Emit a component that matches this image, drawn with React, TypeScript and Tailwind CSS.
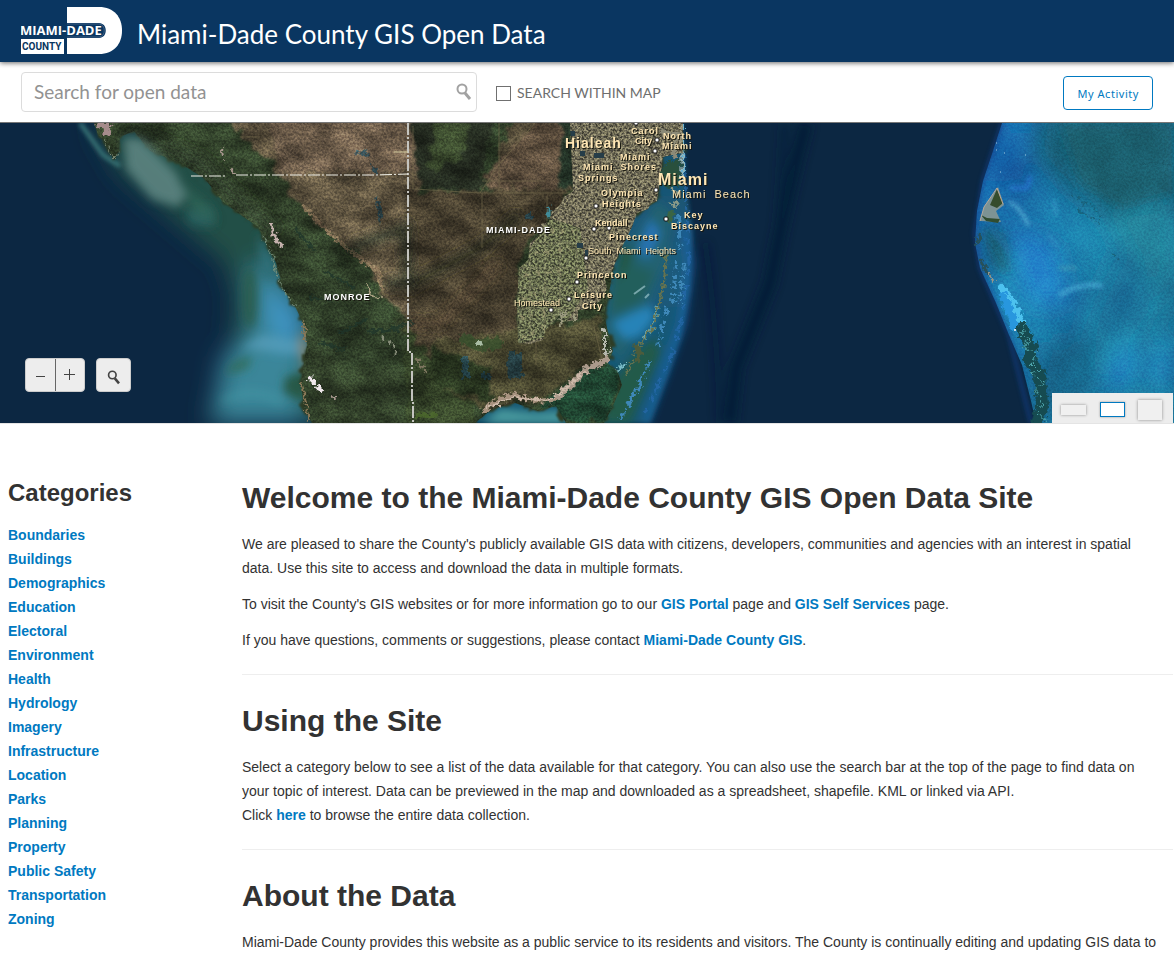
import React from "react";

const categories = [
  "Boundaries",
  "Buildings",
  "Demographics",
  "Education",
  "Electoral",
  "Environment",
  "Health",
  "Hydrology",
  "Imagery",
  "Infrastructure",
  "Location",
  "Parks",
  "Planning",
  "Property",
  "Public Safety",
  "Transportation",
  "Zoning",
];

type Place = { name: string; x: number; y: number; size: number; bold: boolean; spacing: number };

const places: Place[] = [
  { name: "Hialeah", x: 565, y: 25, size: 14, bold: true, spacing: 1 },
  { name: "Carol", x: 631, y: 11, size: 9, bold: true, spacing: 1 },
  { name: "City", x: 635, y: 21, size: 9, bold: true, spacing: 0 },
  { name: "North", x: 663, y: 16, size: 9, bold: true, spacing: 1 },
  { name: "Miami", x: 662, y: 26, size: 9, bold: true, spacing: 1 },
  { name: "Miami", x: 620, y: 37, size: 9, bold: true, spacing: 1 },
  { name: "Miami  Shores", x: 583, y: 47, size: 9, bold: true, spacing: 1 },
  { name: "Springs", x: 578, y: 58, size: 9, bold: true, spacing: 1 },
  { name: "Miami", x: 658, y: 62, size: 16, bold: true, spacing: 1 },
  { name: "Miami  Beach", x: 672, y: 75, size: 11, bold: false, spacing: 1 },
  { name: "Olympia", x: 601, y: 73, size: 9, bold: true, spacing: 1 },
  { name: "Heights", x: 602, y: 84, size: 9, bold: true, spacing: 1 },
  { name: "Key", x: 684, y: 95, size: 9, bold: true, spacing: 1 },
  { name: "Biscayne", x: 671, y: 106, size: 9, bold: true, spacing: 1 },
  { name: "Kendall", x: 595, y: 103, size: 9, bold: true, spacing: 0 },
  { name: "Pinecrest", x: 609, y: 117, size: 9, bold: true, spacing: 1 },
  { name: "South  Miami  Heights", x: 588, y: 131, size: 9, bold: false, spacing: 0 },
  { name: "Princeton", x: 577, y: 155, size: 9, bold: true, spacing: 1 },
  { name: "Leisure", x: 574, y: 175, size: 9, bold: true, spacing: 1 },
  { name: "City", x: 582, y: 186, size: 9, bold: true, spacing: 1 },
  { name: "Homestead", x: 514, y: 183, size: 9, bold: false, spacing: 0 },
];

const markers = [
  [657, 17], [655, 28], [656, 67], [596, 83], [594, 106], [609, 105],
  [666, 96], [586, 135], [577, 159], [569, 176], [551, 187], [636, 0],
];

const land =
  "M94 0 L98 12 L105 18 L114 37 L119 28 L120 14 L134 8 L150 28 L180 40 L205 56 L222 78 L238 90 L258 104 L268 124 L276 140 L284 168 L296 185 L304 202 L307 222 L304 240 L301 262 L304 285 L312 300 L475 300 L492 286 L515 280 L538 288 L556 283 L566 300 L604 300 L612 285 L622 262 L618 250 L608 240 L613 228 L607 205 L604 190 L610 165 L614 140 L632 98 L640 88 L657 78 L661 50 L663 30 L683 30 L683 0 Z";

function Aerial() {
  return (
    <svg
      className="block h-full w-full"
      viewBox="0 0 1174 300"
      preserveAspectRatio="xMinYMin slice"
      role="img"
      aria-label="Satellite map of Miami-Dade County"
    >
      <defs>
        <filter id="b2" x="-20%" y="-20%" width="140%" height="140%"><feGaussianBlur stdDeviation="2" /></filter>
        <filter id="b5" x="-50%" y="-50%" width="200%" height="200%"><feGaussianBlur stdDeviation="5" /></filter>
        <filter id="b12" x="-50%" y="-50%" width="200%" height="200%"><feGaussianBlur stdDeviation="12" /></filter>
        <filter id="rough" x="-5%" y="-5%" width="110%" height="110%" colorInterpolationFilters="sRGB">
          <feTurbulence type="fractalNoise" baseFrequency="0.09" numOctaves="4" seed="4" result="n" />
          <feDisplacementMap in="SourceGraphic" in2="n" scale="18" xChannelSelector="R" yChannelSelector="G" />
          <feGaussianBlur stdDeviation="1" />
        </filter>
        <filter id="fine" x="-10%" y="-10%" width="120%" height="120%" colorInterpolationFilters="sRGB">
          <feTurbulence type="fractalNoise" baseFrequency="0.22" numOctaves="3" seed="9" result="n" />
          <feDisplacementMap in="SourceGraphic" in2="n" scale="9" xChannelSelector="R" yChannelSelector="G" />
        </filter>
        <filter id="grain" x="0" y="0" width="100%" height="100%" colorInterpolationFilters="sRGB">
          <feTurbulence type="fractalNoise" baseFrequency="0.03 0.05" numOctaves="7" seed="12" />
          <feColorMatrix values="2 0 0 0 -0.5  2 0 0 0 -0.5  2 0 0 0 -0.5  0 0 0 0 1" />
        </filter>
        <filter id="speckle" x="0" y="0" width="100%" height="100%" colorInterpolationFilters="sRGB">
          <feTurbulence type="fractalNoise" baseFrequency="0.45" numOctaves="3" seed="7" />
          <feColorMatrix values="2.4 0 0 0 -0.7  2.4 0 0 0 -0.7  2.2 0.2 0 0 -0.7  0 0 0 0 1" />
        </filter>
        <filter id="swirl" x="0" y="0" width="100%" height="100%" colorInterpolationFilters="sRGB">
          <feTurbulence type="fractalNoise" baseFrequency="0.018 0.014" numOctaves="4" seed="21" />
          <feColorMatrix values="1.6 0 0 0 -0.3  1.6 0 0 0 -0.3  1.6 0 0 0 -0.3  0 0 0 0 1" />
        </filter>
        <linearGradient id="shelf" x1="0" y1="0" x2="0" y2="1">
          <stop offset="0" stopColor="#17506c" />
          <stop offset="0.45" stopColor="#1c5b7c" />
          <stop offset="1" stopColor="#145670" />
        </linearGradient>
        <linearGradient id="bank" x1="0" y1="0" x2="1" y2="0.4">
          <stop offset="0" stopColor="#155cab" />
          <stop offset="0.35" stopColor="#1b78ae" />
          <stop offset="1" stopColor="#1a779b" />
        </linearGradient>
        <clipPath id="landClip"><path d={land} /></clipPath>
        <clipPath id="urbanClip">
          <path d="M570 0 L683 0 L682 30 L663 34 L657 78 L651 80 L648 86 L637 90 L632 104 L620 128 L612 148 L605 156 L607 166 L600 178 L588 186 L578 187 L578 197 L563 199 L560 192 L552 201 L546 206 L543 217 L530 221 L518 220 L517 180 L519 145 L528 137 L530 120 L538 113 L541 101 L549 99 L552 88 L560 82 L564 74 L573 68 Z" />
        </clipPath>
        <clipPath id="bankClip">
          <path d="M1002 0 L993 28 L983 58 L977 88 L975 120 L980 145 L996 180 L1009 212 L1022 242 L1031 278 L1036 300 L1174 300 L1174 0 Z" />
        </clipPath>
      </defs>

      <rect width="1174" height="300" fill="#0c2742" />

      {/* deep-water streaks */}
      <g filter="url(#b5)" fill="none" stroke="#061b35" opacity="0.8">
        <path d="M806 0 Q786 75 770 160 L736 245 L730 300" strokeWidth="12" />
        <path d="M705 120 Q716 190 720 300" strokeWidth="7" opacity="0.5" />
        <path d="M785 0 L778 130" strokeWidth="8" opacity="0.6" />
      </g>

      {/* Gulf shallows */}
      <g filter="url(#b12)">
        <path d="M92 0 L120 50 L150 76 L185 106 L225 140 L235 175 L232 220 L207 300 L330 300 L320 190 L280 90 L180 10 Z" fill="#245047" />
        <path d="M250 140 L276 150 L300 190 L305 245 L300 300 L212 300 L222 235 L252 210 Z" fill="#3f8fa8" opacity="0.85" />
        <path d="M262 160 L292 184 L303 214 L282 225 Z" fill="#419ad0" />
      </g>
      <g filter="url(#b5)">
        <ellipse cx="250" cy="175" rx="8" ry="30" fill="#285a45" opacity="0.7" />
        <path d="M232 240 L252 232 L248 246 L225 252 Z" fill="#2c6950" opacity="0.7" />
        <path d="M258 110 L275 142 L268 160 L262 150 Z" fill="#2f6f79" />
        <path d="M262 212 L302 218 L298 232 L240 225 Z" fill="#5a9fbe" opacity="0.7" />
        <path d="M300 205 L311 230 L304 250 L298 225 Z" fill="#8b8873" opacity="0.8" />
        <path d="M285 255 L312 245 L306 280 L284 270 Z" fill="#275847" />
        <path d="M222 278 Q255 262 282 280" stroke="#4da3ae" strokeWidth="4" fill="none" opacity="0.6" />
        <path d="M186 86 L212 84 L214 104 L190 102 Z" fill="#2a6464" opacity="0.8" />
      </g>
      <path d="M80 0 L103 32 L120 43" fill="none" stroke="#3b7879" strokeWidth="4" filter="url(#b2)" />

      {/* Atlantic shelf */}
      <path d="M600 20 L683 0 L686 60 L692 110 L690 168 L681 214 L668 252 L650 300 L460 300 L520 270 L590 230 Z" fill="url(#shelf)" filter="url(#b2)" />
      <g filter="url(#b5)">
        <path d="M657 78 L672 90 L665 140 L652 170 L632 220 L620 240 L604 210 L612 150 Z" fill="#216271" />
        <path d="M650 95 L661 110 L648 136 L638 128 Z" fill="#2673b4" />
        <path d="M652 182 L655 196 L640 214 L624 216 L612 200 L632 190 Z" fill="#2683b8" />
        <path d="M622 120 L635 130 L620 160 L614 160 Z" fill="#225743" />
        <path d="M630 140 L655 150 L640 180 L612 190 L612 165 Z" fill="#245f5c" />
        <path d="M482 300 L500 286 L536 290 L560 288 L570 300 Z" fill="#4c9da0" />
        <path d="M612 260 L634 232 L655 214 L660 230 L630 300 L600 300 Z" fill="#225a48" />
        <path d="M684 100 L690 140 L682 200 L664 250 L645 300" stroke="#1f62a8" strokeWidth="6" fill="none" />
      </g>
      <g filter="url(#fine)" fill="none">
        <path d="M683 30 L687 90 L689 140 L683 190 L670 238 L645 290" stroke="#2a6cb3" strokeWidth="3" opacity="0.6" strokeDasharray="14 5 6 8" />
        <path d="M683 0 V60" stroke="#68b0d1" strokeWidth="2" />
        <path d="M678 90 L680 128 M676 140 L673 180 M668 185 L658 222 M650 238 L629 282 M642 260 L620 296 M684 140 L680 180" stroke="#3e88b8" strokeWidth="4" strokeDasharray="8 4 3 3" />
        <path d="M658 183 L652 205 L644 215 M626 240 L616 250" stroke="#77bac5" strokeWidth="3" />
        <path d="M666 130 L664 160 L659 180 L652 205 L642 218 L632 232 M634 238 L624 252" stroke="#66734f" strokeWidth="2" />
        <path d="M635 222 L640 230 L636 238" stroke="#4c5c3c" strokeWidth="5" />
      </g>
      <path d="M634 171 L645 163 M645 175 L649 171" stroke="#9bc5cb" strokeWidth="2" opacity="0.7" />

      {/* Mainland */}
      <g filter="url(#rough)">
        <path d={land} fill="#2e3c25" />
      </g>
      <g clipPath="url(#landClip)">
        <rect width="700" height="300" fill="#2f3e28" />
        <g filter="url(#rough)">
          <path d="M225 -5 L275 47 L302 84 L318 100 L342 120 L372 142 L380 170 L415 202 L420 -5 Z" fill="#5f5440" />
          <path d="M270 -5 L420 -5 L420 48 L282 50 Z" fill="#6a5a48" />
          <path d="M404 68 L570 68 L549 94 L518 143 L517 220 L500 245 L410 235 Z" fill="#463e2e" />
          <path d="M412 -5 L418 64 L480 69 L493 -5 Z" fill="#242b20" />
          <path d="M435 -5 L470 -5 L465 32 L430 50 Z" fill="#354329" />
          <path d="M520 -5 L570 -5 L570 68 L493 69 L500 15 Z" fill="#4f4735" />
          <path d="M480 65 L490 50 L535 0 L562 0 L562 67 Z" fill="#5e4f3e" />
          <path d="M561 -5 L574 -5 L574 64 L560 67 Z" fill="#253528" />
          <path d="M430 220 L600 195 L608 236 L584 246 L545 275 L485 286 L430 260 Z" fill="#47452e" />
          <path d="M430 222 L490 245 L490 280 L428 260 Z" fill="#293620" />
          <path d="M405 190 L440 265 L475 280 L475 310 L405 310 Z" fill="#324026" />
          <path d="M308 220 L342 245 L403 245 L405 310 L320 310 Z" fill="#303e28" />
          <path d="M543 282 L583 251 L612 238 L622 260 L605 300 L570 300 Z" fill="#1f4430" />
        </g>
        <path d="M302 82 L320 101 L345 124 L378 148 L382 165" stroke="#8d775b" strokeWidth="4" fill="none" opacity="0.8" filter="url(#fine)" />
        <g filter="url(#b5)" fill="none">
          <path d="M405 165 L480 125 L520 92" stroke="#2d2d22" strokeWidth="12" />
          <path d="M400 202 L440 200 L500 140" stroke="#5e4b37" strokeWidth="7" opacity="0.7" />
          <path d="M350 125 L405 105 L408 160 L385 160" stroke="#343829" strokeWidth="12" />
          <path d="M130 10 L200 40 L240 80 L275 110" stroke="#34452c" strokeWidth="18" opacity="0.7" />
        </g>
        <g filter="url(#fine)" fill="#244653" opacity="0.8">
          <path d="M462 233 h7 v22 h-7z M508 230 h14 v25 h-16z M481 251 h10 v5 h-10z M525 91 h10 v6 h-10z M375 72 l8 15 -3 15z M354 30 l12 -3 3 7z M370 40 l10 8 -3 5z" />
        </g>
        <rect width="700" height="300" filter="url(#grain)" opacity="0.32" style={{ mixBlendMode: "overlay" }} />
        <rect width="700" height="300" filter="url(#speckle)" opacity="0.2" style={{ mixBlendMode: "overlay" }} />
        <g fill="none" stroke="#746c4d" strokeWidth="1" opacity="0.6">
          <path d="M413 3 V66 L480 70 H570 M482 70 V125 M499 0 V68 M482 58 H545 M480 70 L498 43 L535 0 M240 14 H258 M536 218 V242 M547 73 V98 M594 204 L602 236" />
        </g>
        <g stroke="#1e352b" strokeWidth="3" filter="url(#fine)" fill="none" opacity="0.7">
          <path d="M295 106 L315 128 M324 148 L355 165 M335 176 L310 175 M340 210 L368 195 M365 208 L400 207 M320 220 L345 226 M391 205 L413 200" />
        </g>
      </g>

      {/* Plume off the Naples coast */}
      <g filter="url(#b5)">
        <path d="M124 14 L142 16 L176 50 L186 72 L178 84 L152 76 L126 46 Z" fill="#5f8684" opacity="0.85" />
        <path d="M182 62 L204 78 L218 98 L196 92 Z" fill="#2f6659" opacity="0.8" />
      </g>

      {/* Developed corridor and farmland */}
      <g clipPath="url(#urbanClip)">
        <rect x="510" width="180" height="230" fill="#6e6a55" />
        <path d="M517 145 L550 95 L580 105 L588 165 L560 210 L515 222 Z" fill="#656b4d" />
        <rect x="510" width="180" height="230" filter="url(#speckle)" opacity="0.5" style={{ mixBlendMode: "overlay" }} />
        <g stroke="#b5ac8b" strokeWidth="1" opacity="0.3">
          <path d="M530 110 V220 M545 85 V218 M560 70 V205 M577 0 V190 M592 0 V190 M608 0 V150 M625 0 V115 M642 0 V85 M520 145 H612 M520 165 H605 M520 185 H600 M535 120 H625 M555 98 H635 M570 82 H653 M570 58 H660 M570 38 H661 M570 18 H661" />
        </g>
        <g filter="url(#fine)" stroke="#b3aa80" strokeWidth="3" strokeDasharray="4 7" opacity="0.5" fill="none">
          <path d="M522 215 L545 205 M520 195 L550 190 M522 175 L548 168 M525 152 L560 148 M535 130 L570 126 M550 108 L580 108" />
        </g>
        <path d="M568 8 h7 v5 h-7z M569 20 h9 v4 h-9z M580 28 h5 v5 h-5z M594 30 h10 v5 h-10z M577 120 h6 v5 h-6z M585 127 h3 v6 h-3z M615 143 h4 v3 h-4z" fill="#263d48" />
      </g>
      <g filter="url(#fine)">
        <path d="M665 40 L681 35 L680 62 L667 66 L660 55 Z" fill="#29503d" />
        <path d="M661 8 L676 12 L674 34" stroke="#8b8a78" strokeWidth="4" fill="none" />
        <path d="M671 66 L679 71 L675 84 L669 79" stroke="#8d9b89" strokeWidth="2" fill="none" />
        <path d="M668 90 L674 88 L672 102 L665 97 Z" fill="#3a6544" />
        <path d="M682 2 V56" stroke="#c2bfa7" strokeWidth="1" />
      </g>

      {/* Pale marl shoreline, salt flats and lakes */}
      <g filter="url(#fine)" fill="none" strokeLinecap="round">
        <path d="M484 287 L500 276 L512 272 L527 276 L543 278 L558 276" stroke="#a8937f" strokeWidth="5" strokeDasharray="4 5" />
        <path d="M558 274 L568 264 L576 257 L585 247 L599 241 L607 236" stroke="#ab9a8b" strokeWidth="6" />
        <path d="M487 285 L514 274 L546 278 L560 270 L586 248" stroke="#cfbbab" strokeWidth="2" />
        <path d="M605 207 V232 L609 228" stroke="#b6b9ae" strokeWidth="2" />
        <path d="M272 103 L275 116 L281 122" stroke="#c5b1ad" strokeWidth="4" />
        <path d="M263 113 L272 132 L276 148 L285 170 L297 185" stroke="#78907c" strokeWidth="1" />
        <path d="M310 255 L314 259 M318 265 L322 268" stroke="#f0e8ec" strokeWidth="4" />
        <path d="M333 274 L336 276 M222 26 L223 34 M230 46 L234 50" stroke="#a9988f" strokeWidth="2" />
        <path d="M382 215 L393 220 L395 230" stroke="#858b77" strokeWidth="3" strokeDasharray="2 5" />
        <path d="M368 162 L372 174 L380 175" stroke="#aaa082" strokeWidth="2" />
        <path d="M99 1 L108 3 L106 9" stroke="#a58c8b" strokeWidth="7" />
        <path d="M105 17 L113 36 L119 29" stroke="#7b8974" strokeWidth="1" />
        <path d="M303 200 L306 220 M302 262 L309 297" stroke="#887757" strokeWidth="2" />
        <path d="M418 236 L428 253" stroke="#7c755e" strokeWidth="3" strokeDasharray="2 5" />
        <path d="M465 216 L478 222 L496 220" stroke="#34552d" strokeWidth="12" opacity="0.6" />
        <path d="M477 221 h3" stroke="#a9bca4" strokeWidth="4" />
        <path d="M562 203 L560 193 L566 190 M575 192 V199" stroke="#9c9b80" strokeWidth="2" />
        <path d="M418 292 H436" stroke="#51702d" strokeWidth="5" opacity="0.7" />
        <path d="M549 85 V94" stroke="#408b98" strokeWidth="3" />
      </g>

      {/* Bahamas bank */}
      <g clipPath="url(#bankClip)">
        <rect x="970" width="204" height="300" fill="url(#bank)" />
        <g filter="url(#b12)">
          <path d="M1042 -10 L1180 -10 L1180 90 L1110 100 L1070 70 L1035 30 Z" fill="#195e76" />
          <path d="M1012 105 L1055 120 L1070 180 L1032 185 L1008 130 Z" fill="#2386cd" />
          <path d="M1115 130 L1150 150 L1160 190 L1122 240 L1080 280 L1065 250 Z" fill="#1b7ea3" />
          <path d="M1045 220 L1100 215 L1080 300 L1030 300 Z" fill="#18668b" />
          <path d="M1119 228 L1135 218 L1130 260 L1108 270 Z" fill="#248fd8" />
          <path d="M1155 220 L1174 215 L1170 270 L1145 260 Z" fill="#228bc5" />
          <path d="M1100 90 L1174 80 L1174 190 Z" fill="#22809a" />
          <path d="M990 10 L1020 10 L1014 55 L990 60 Z" fill="#1762a9" />
          <path d="M982 100 L1005 112 L1012 155 L990 150 Z" fill="#1c667e" />
        </g>
        <g filter="url(#b5)">
          <path d="M1060 0 L1174 0 L1174 70 L1120 85 L1080 60 Z" fill="#1a5a66" opacity="0.6" />
          <path d="M983 106 L1002 110 L1010 150 L998 148 Z" fill="#1d6c80" opacity="0.8" />
        </g>
        <g filter="url(#b2)" fill="none" strokeLinecap="round">
          <path d="M1011 65 H1027 L1030 55" stroke="#2582cb" strokeWidth="5" />
          <path d="M1010 79 Q1020 84 1028 101" stroke="#4aa2ce" strokeWidth="4" />
          <path d="M1054 78 L1056 91 M1048 112 L1058 124" stroke="#3093c4" strokeWidth="3" />
          <path d="M1060 172 Q1080 159 1101 163" stroke="#45a7d2" strokeWidth="4" />
          <path d="M1060 145 H1076" stroke="#3c98b6" strokeWidth="3" />
          <path d="M993 108 L1010 130" stroke="#267bab" strokeWidth="3" />
        </g>
        <rect x="970" width="204" height="300" filter="url(#swirl)" opacity="0.15" style={{ mixBlendMode: "overlay" }} />
        <rect x="970" width="204" height="300" filter="url(#speckle)" opacity="0.08" style={{ mixBlendMode: "overlay" }} />
        <g filter="url(#fine)" fill="none" stroke="#184e5c" opacity="0.5">
          <path d="M1070 72 L1090 82 L1104 95 M1078 88 L1103 101 M1140 42 L1155 38 L1170 42 M1095 62 L1110 62 M1112 130 L1121 139" strokeWidth="2" strokeDasharray="5 3 2 4" />
        </g>
      </g>
      <path d="M1002 0 L983 58 L975 110 L980 145 L1009 212 L1031 300" fill="none" stroke="#133f8a" strokeWidth="4" opacity="0.6" filter="url(#b2)" />
      <path d="M980 98 L984 84 L998 64 L1004 82 L996 88 L1001 99 Z" fill="#7d9394" />
      <path d="M997 66 L1003 80 L997 85 L990 82 Z" fill="#354c2c" />
      <path d="M981 92 L987 95 L1000 96 L998 100 L986 98 Z" fill="#304c30" />
      <path d="M980 98 L984 84 L997 65 L1003 81" fill="none" stroke="#b9a89a" />
      <g filter="url(#fine)" fill="none" strokeLinecap="round" strokeLinejoin="round">
        <path d="M980 112 L978 120 M980 137 L989 152" stroke="#26505a" strokeWidth="4" />
        <path d="M988 150 L994 158" stroke="#92968b" strokeWidth="2" />
        <path d="M1001 164 L1010 175 L1019 192 L1022 201" stroke="#4dc2ef" strokeWidth="6" />
        <path d="M1003 173 L1014 197 L1014 204" stroke="#2897de" strokeWidth="8" />
        <path d="M1022 205 L1031 223 L1029 236 L1040 253 L1042 284 L1037 300" stroke="#164b51" strokeWidth="12" />
        <path d="M1026 200 L1021 213 L1029 216 L1024 226 L1037 230 L1031 240 L1039 248 L1030 250 L1045 259 L1035 266 L1044 280 L1037 288 L1048 300" stroke="#4ea6ac" strokeWidth="1" />
      </g>
      <path d="M996 20 h1 M996 27 h1 M1000 49 h1 M1004 30 h1 M1025 32 h1" stroke="#a3c9e0" strokeWidth="1" />
      <circle cx="1015" cy="207" r="1" fill="#fff" />

      {/* County lines */}
      <g fill="none" stroke="#f0f0e8" strokeWidth="1" strokeDasharray="12 2 2 2">
        <path d="M408 0 V229 H412 V278 H413 V300" strokeWidth="2" stroke="#c4c4bf" />
        <path d="M236 52 H375 L408 51 M191 53 H225" />
      </g>
      <path d="M394 29 H408" stroke="#d9d1a3" />

      {markers.map(([x, y]) => (
        <rect key={`${x}-${y}`} x={x - 2} y={y - 2} width="4" height="4" rx="1" fill="#fff" stroke="#111" strokeWidth="1" />
      ))}
      <g fontFamily="'Liberation Sans', Arial, sans-serif" fill="#ffe7b5" style={{ filter: "drop-shadow(1px 1px 0 #17170f)" }}>
        {places.map((p) => (
          <text key={`${p.name}-${p.x}`} x={p.x} y={p.y} fontSize={p.size} fontWeight={p.bold ? 700 : 400} letterSpacing={p.spacing} xmlSpace="preserve">
            {p.name}
          </text>
        ))}
        <g fontSize="9" fontWeight="700" letterSpacing="1" fill="#fff">
          <text x="324" y="177">MONROE</text>
          <text x="486" y="110">MIAMI-DADE</text>
        </g>
      </g>
    </svg>
  );
}

function CountyLogo() {
  return (
    <svg className="h-[48px] w-[102px] shrink-0" viewBox="0 0 102 48" role="img" aria-label="Miami-Dade County">
      <path d="M46 0 H78 C93 0 101 10 101 23.500 C101 37 93 47 78 47 H46 Z" fill="#fff" />
      <path d="M45 16 H78 C87 16 87 31 78 31 H45 Z" fill="#0a3661" />
      <path d="M46 17 H78 C85 17 85 30 78 30 H46" fill="none" stroke="#7189a4" strokeWidth="0.500" />
      <rect y="32" width="43" height="15" fill="#fff" />
      <g fontFamily="'Open Sans', sans-serif" fontWeight="700">
        <text x="-1" y="28" fontSize="13" fill="#fff">MIAMI-DADE</text>
        <text x="1" y="43" fontSize="10" fontFamily="Roboto, sans-serif" fontWeight="700" fill="#0a3661">COUNTY</text>
      </g>
    </svg>
  );
}

function Magnifier({ className }: { className: string }) {
  return (
    <svg className={className} viewBox="0 0 16 18" fill="none" stroke="currentColor" aria-hidden="true">
      <circle cx="6" cy="6" r="4.500" strokeWidth="2" />
      <path d="M9 10 L14 16" strokeWidth="3" />
    </svg>
  );
}

function TextLink({ children }: { children: React.ReactNode }) {
  return <a href="#" className="font-bold text-[#0079c1] hover:underline">{children}</a>;
}

export default function App() {
  return (
    <div className="min-h-screen bg-white font-['Liberation_Sans',Arial,sans-serif] text-sm leading-6 text-[#323232]">
      <header className="relative flex h-[62px] items-center gap-[14px] bg-[#0a3661] pl-[21px] shadow-[0_1px_5px_#666]">
        <CountyLogo />
        <span className="pt-[6px] font-[Lato,sans-serif] text-[26px] leading-8 text-white">Miami-Dade County GIS Open Data</span>
      </header>

      <div className="flex h-[61px] items-center border-b border-[#777] px-[21px] font-[Lato,sans-serif]">
        <form className="relative w-[456px]" onSubmit={(e) => e.preventDefault()}>
          <input
            type="search"
            aria-label="Search for open data"
            placeholder="Search for open data"
            className="h-10 w-full rounded border border-[#dcdcdc] pr-9 pb-[2px] pl-3 text-[19px] text-[#555] outline-none placeholder:text-[#929292]"
          />
          <button type="submit" aria-label="Search" className="absolute top-[11px] right-[5px] text-[#a2a2a2]">
            <Magnifier className="h-[18px] w-4" />
          </button>
        </form>
        <label className="ml-[19px] flex items-center gap-[6px] pt-[2px] text-sm text-[#6e6e6e]">
          <input type="checkbox" className="size-[15px] appearance-none border border-[#707070] bg-white checked:bg-[#0079c1]" />
          SEARCH WITHIN MAP
        </label>
        <button type="button" className="mt-[2px] ml-auto h-[34px] rounded border border-[#0079c1] px-[13px] pt-[2px] font-['Noto_Sans',sans-serif] text-[11px] tracking-wider text-[#0079c1]">
          My Activity
        </button>
      </div>

      <section className="relative h-[301px] overflow-hidden border-b border-[#e4e4e4]" aria-label="Map">
        <Aerial />
        <div className="absolute bottom-[31px] left-[25px] flex gap-[11px] text-[#444]">
          <div className="flex h-[34px] w-[60px] overflow-hidden rounded border border-[#ccc] bg-[#ededed]">
            <button type="button" aria-label="Zoom out" className="flex flex-1 items-center justify-center border-r border-[#666]">
              <svg className="size-[13px]" viewBox="0 0 13 13" stroke="currentColor" aria-hidden="true"><path d="M2 7.500 H11" /></svg>
            </button>
            <button type="button" aria-label="Zoom in" className="flex flex-1 items-center justify-center">
              <svg className="size-[13px]" viewBox="0 0 13 13" stroke="currentColor" aria-hidden="true"><path d="M1 5.500 H12 M6.500 0 V11" /></svg>
            </button>
          </div>
          <button type="button" aria-label="Search map" className="flex h-[34px] w-[35px] items-center justify-center rounded border border-[#ccc] bg-[#ededed] pt-1">
            <Magnifier className="h-[15px] w-[14px]" />
          </button>
        </div>
        <div className="absolute right-px bottom-0 flex h-[30px] w-[121px] items-center justify-between bg-[#ededed] pt-[3px] pr-[11px] pl-[9px]">
          <button type="button" aria-label="Small map" className="h-[10px] w-[25px] bg-[#f0f0f0] shadow-[0_0_3px_#888]" />
          <button type="button" aria-label="Medium map" className="h-[15px] w-[25px] border border-[#0079c1] bg-white shadow-[0_0_2px_#999]" />
          <button type="button" aria-label="Large map" className="h-5 w-6 bg-[#f0f0f0] shadow-[0_0_3px_#888]" />
        </div>
      </section>

      <div className="flex pt-[54px] pr-px pb-1">
        <nav className="w-[234px] shrink-0 pl-2" aria-labelledby="categories">
          <h2 id="categories" className="text-2xl leading-[30px] font-bold">Categories</h2>
          <ul className="pt-[15px]">
            {categories.map((name) => (
              <li key={name}><TextLink>{name}</TextLink></li>
            ))}
          </ul>
        </nav>

        <main className="min-w-0 flex-1 pl-2">
          <section className="border-b border-[#eee] pb-[22px]">
            <h1 className="text-3xl leading-10 font-bold">Welcome to the Miami-Dade County GIS Open Data Site</h1>
            <div className="flex flex-col gap-3 pt-[14px]">
              <p>
                We are pleased to share the County's publicly available GIS data with citizens, developers, communities and agencies with an interest in spatial
                <br />
                data. Use this site to access and download the data in multiple formats.
              </p>
              <p>
                To visit the County's GIS websites or for more information go to our <TextLink>GIS Portal</TextLink> page and <TextLink>GIS Self Services</TextLink> page.
              </p>
              <p>
                If you have questions, comments or suggestions, please contact <TextLink>Miami-Dade County GIS</TextLink>.
              </p>
            </div>
          </section>

          <section className="border-b border-[#eee] pt-[26px] pb-[22px]">
            <h2 className="text-3xl leading-10 font-bold">Using the Site</h2>
            <p className="pt-[14px]">
              Select a category below to see a list of the data available for that category. You can also use the search bar at the top of the page to find data on
              <br />
              your topic of interest. Data can be previewed in the map and downloaded as a spreadsheet, shapefile. KML or linked via API.
              <br />
              Click <TextLink>here</TextLink> to browse the entire data collection.
            </p>
          </section>

          <section className="pt-[26px]">
            <h2 className="text-3xl leading-10 font-bold">About the Data</h2>
            <p className="pt-[14px]">
              Miami-Dade County provides this website as a public service to its residents and visitors. The County is continually editing and updating GIS data to
            </p>
          </section>
        </main>
      </div>
    </div>
  );
}
